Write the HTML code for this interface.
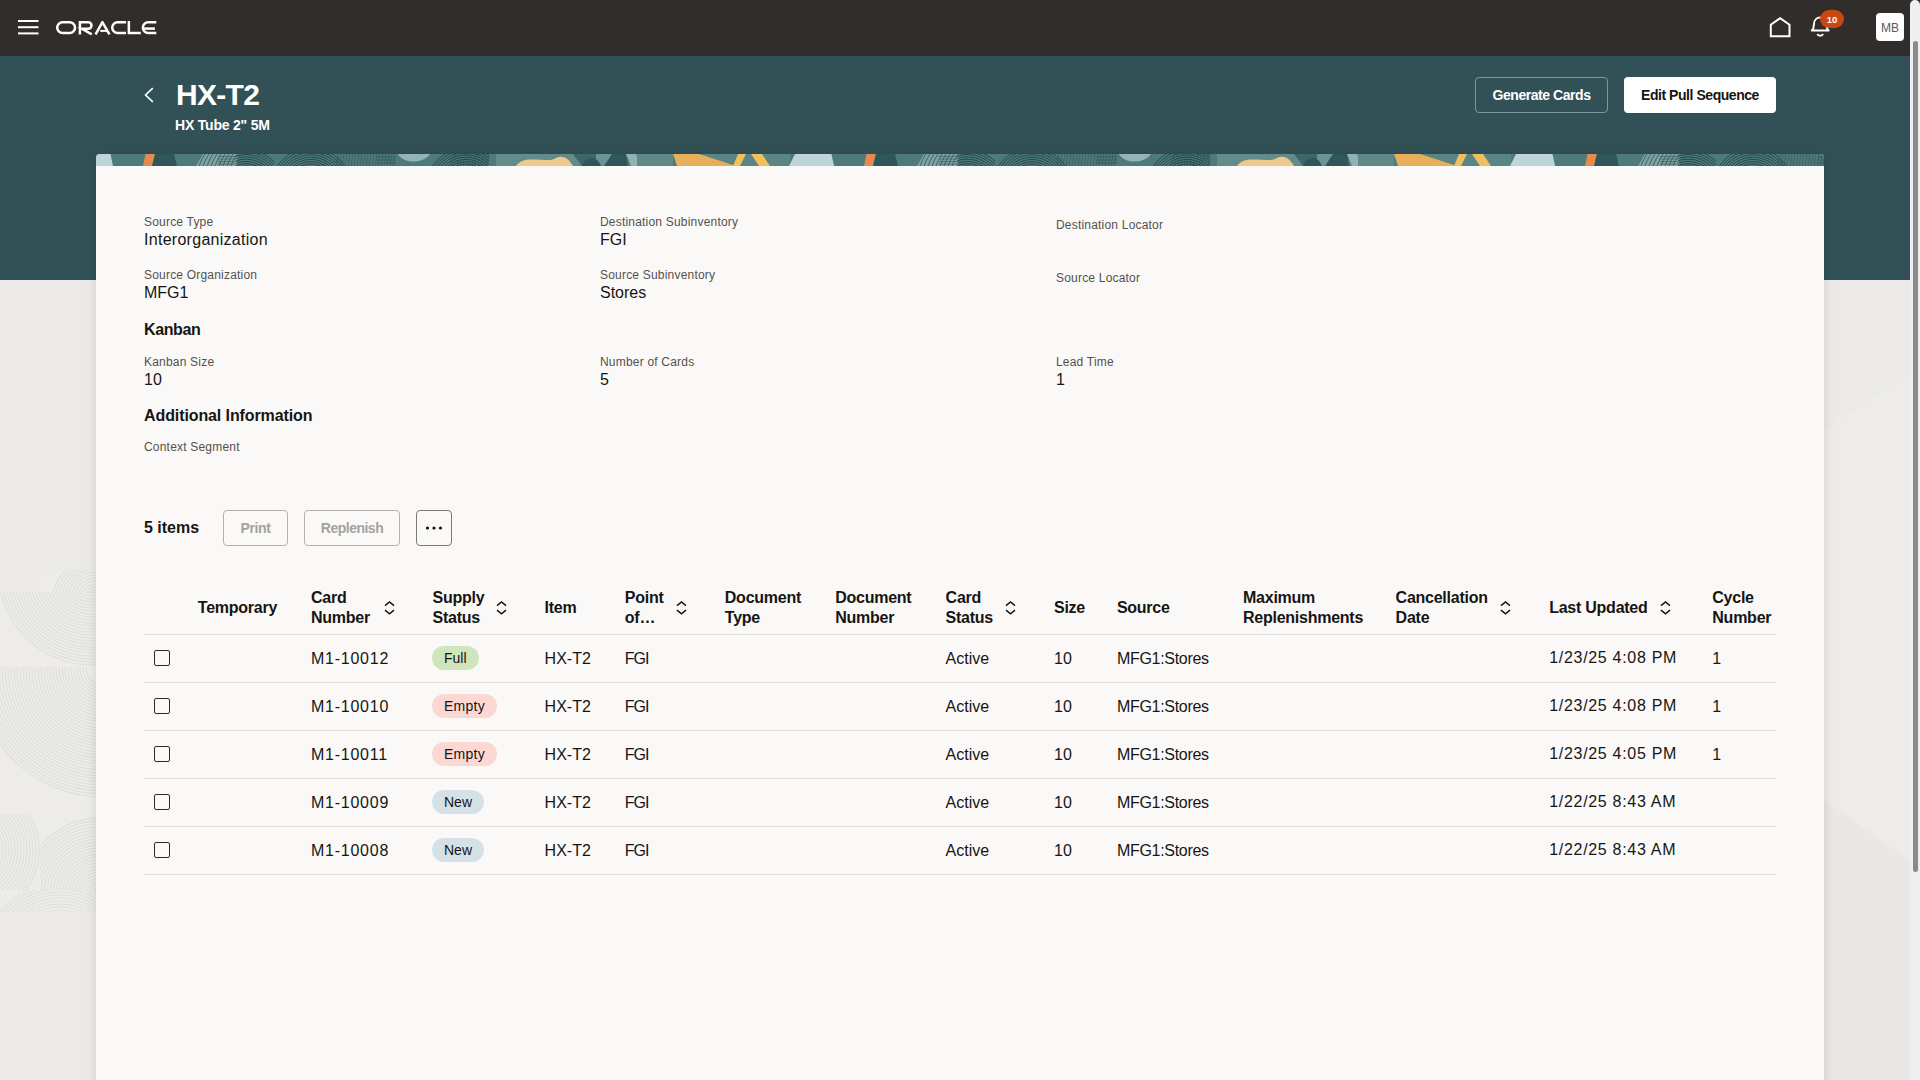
<!DOCTYPE html>
<html><head><meta charset="utf-8">
<style>
*{box-sizing:border-box;margin:0;padding:0}
html,body{width:1920px;height:1080px;overflow:hidden}
body{font-family:"Liberation Sans",sans-serif;background:#ebeae8;color:#161513;position:relative}
.abs{position:absolute}
.t{position:absolute;white-space:nowrap;line-height:1}
#hdr{left:0;top:0;width:1920px;height:56px;background:#312d2a}
#band{left:0;top:56px;width:1910px;height:224px;background:#325157}
#sb{left:1910px;top:0;width:10px;height:1080px;background:#efefef;border-radius:5px 5px 0 0}
#thumb{left:1913px;top:41px;width:5px;height:831px;background:#8a8a8a;border-radius:3px}
#card{left:96px;top:154px;width:1728px;height:940px;background:#fbf9f8;border-radius:4px 4px 0 0;box-shadow:0 0 11px rgba(0,0,0,.13);overflow:hidden}
.lbl{font-size:12px;color:#53514e;letter-spacing:0.2px}
.val{font-size:16px;color:#161513}
.h{font-size:16px;font-weight:700;color:#161513}
.btn{position:absolute;border-radius:4px;height:36px}
.th{font-size:16px;font-weight:700;color:#161513;line-height:20px;letter-spacing:-0.25px}
.td{font-size:16px;color:#161513}
.rowline{position:absolute;left:144px;width:1632px;height:1px;background:#e1dfdc}
.cb{position:absolute;left:154px;width:16px;height:16px;border:1.5px solid #2b2927;border-radius:2px}
.badge{position:absolute;left:432px;height:24px;border-radius:12px;font-size:14px;line-height:24px;padding:0 12px;color:#161513}
.sort{position:absolute;width:10px;height:13px}
</style></head>
<body>
<div id="hdr" class="abs"></div>
<div id="band" class="abs"></div>
<svg class="abs" style="left:0;top:0" width="96" height="1080" viewBox="0 0 96 1080"><defs><clipPath id="lt0"><rect x="40" y="570" width="56" height="22"/></clipPath><clipPath id="lt1"><rect x="0" y="592" width="96" height="75"/></clipPath><clipPath id="lt2"><rect x="0" y="667" width="96" height="148"/></clipPath><clipPath id="lt3"><rect x="40" y="815" width="56" height="75"/></clipPath><clipPath id="lt4"><rect x="0" y="815" width="40" height="75"/></clipPath><clipPath id="lt5"><rect x="0" y="890" width="96" height="22"/></clipPath></defs><g fill="none" stroke="#e0dfdd" stroke-width="1.2"><g clip-path="url(#lt0)"><rect x="40" y="570" width="56" height="22" fill="#edecea" stroke="none"/><circle cx="96" cy="600" r="10"/><circle cx="96" cy="600" r="13"/><circle cx="96" cy="600" r="16"/><circle cx="96" cy="600" r="19"/><circle cx="96" cy="600" r="22"/><circle cx="96" cy="600" r="25"/><circle cx="96" cy="600" r="28"/><circle cx="96" cy="600" r="31"/><circle cx="96" cy="600" r="34"/><circle cx="96" cy="600" r="37"/><circle cx="96" cy="600" r="40"/><circle cx="96" cy="600" r="43"/></g><g clip-path="url(#lt1)"><rect x="0" y="592" width="96" height="75" fill="#edecea" stroke="none"/><circle cx="92" cy="572" r="18"/><circle cx="92" cy="572" r="21"/><circle cx="92" cy="572" r="24"/><circle cx="92" cy="572" r="27"/><circle cx="92" cy="572" r="30"/><circle cx="92" cy="572" r="33"/><circle cx="92" cy="572" r="36"/><circle cx="92" cy="572" r="39"/><circle cx="92" cy="572" r="42"/><circle cx="92" cy="572" r="45"/><circle cx="92" cy="572" r="48"/><circle cx="92" cy="572" r="51"/><circle cx="92" cy="572" r="54"/><circle cx="92" cy="572" r="57"/><circle cx="92" cy="572" r="60"/><circle cx="92" cy="572" r="63"/><circle cx="92" cy="572" r="66"/><circle cx="92" cy="572" r="69"/><circle cx="92" cy="572" r="72"/><circle cx="92" cy="572" r="75"/><circle cx="92" cy="572" r="78"/><circle cx="92" cy="572" r="81"/><circle cx="92" cy="572" r="84"/><circle cx="92" cy="572" r="87"/><circle cx="92" cy="572" r="90"/><circle cx="92" cy="572" r="93"/></g><g clip-path="url(#lt2)"><rect x="0" y="667" width="96" height="148" fill="#edecea" stroke="none"/><circle cx="104" cy="668" r="18"/><circle cx="104" cy="668" r="21"/><circle cx="104" cy="668" r="24"/><circle cx="104" cy="668" r="27"/><circle cx="104" cy="668" r="30"/><circle cx="104" cy="668" r="33"/><circle cx="104" cy="668" r="36"/><circle cx="104" cy="668" r="39"/><circle cx="104" cy="668" r="42"/><circle cx="104" cy="668" r="45"/><circle cx="104" cy="668" r="48"/><circle cx="104" cy="668" r="51"/><circle cx="104" cy="668" r="54"/><circle cx="104" cy="668" r="57"/><circle cx="104" cy="668" r="60"/><circle cx="104" cy="668" r="63"/><circle cx="104" cy="668" r="66"/><circle cx="104" cy="668" r="69"/><circle cx="104" cy="668" r="72"/><circle cx="104" cy="668" r="75"/><circle cx="104" cy="668" r="78"/><circle cx="104" cy="668" r="81"/><circle cx="104" cy="668" r="84"/><circle cx="104" cy="668" r="87"/><circle cx="104" cy="668" r="90"/><circle cx="104" cy="668" r="93"/><circle cx="104" cy="668" r="96"/><circle cx="104" cy="668" r="99"/><circle cx="104" cy="668" r="102"/><circle cx="104" cy="668" r="105"/><circle cx="104" cy="668" r="108"/><circle cx="104" cy="668" r="111"/><circle cx="104" cy="668" r="114"/><circle cx="104" cy="668" r="117"/><circle cx="104" cy="668" r="120"/><circle cx="104" cy="668" r="123"/><circle cx="104" cy="668" r="126"/><circle cx="104" cy="668" r="129"/></g><g clip-path="url(#lt3)"><rect x="40" y="815" width="56" height="75" fill="#edecea" stroke="none"/><circle cx="100" cy="895" r="8"/><circle cx="100" cy="895" r="11"/><circle cx="100" cy="895" r="14"/><circle cx="100" cy="895" r="17"/><circle cx="100" cy="895" r="20"/><circle cx="100" cy="895" r="23"/><circle cx="100" cy="895" r="26"/><circle cx="100" cy="895" r="29"/><circle cx="100" cy="895" r="32"/><circle cx="100" cy="895" r="35"/><circle cx="100" cy="895" r="38"/><circle cx="100" cy="895" r="41"/><circle cx="100" cy="895" r="44"/><circle cx="100" cy="895" r="47"/><circle cx="100" cy="895" r="50"/><circle cx="100" cy="895" r="53"/><circle cx="100" cy="895" r="56"/><circle cx="100" cy="895" r="59"/><circle cx="100" cy="895" r="62"/><circle cx="100" cy="895" r="65"/><circle cx="100" cy="895" r="68"/><circle cx="100" cy="895" r="71"/><circle cx="100" cy="895" r="74"/><circle cx="100" cy="895" r="77"/></g><g clip-path="url(#lt4)"><rect x="0" y="815" width="40" height="75" fill="#edecea" stroke="none"/><circle cx="-30" cy="850" r="18"/><circle cx="-30" cy="850" r="21"/><circle cx="-30" cy="850" r="24"/><circle cx="-30" cy="850" r="27"/><circle cx="-30" cy="850" r="30"/><circle cx="-30" cy="850" r="33"/><circle cx="-30" cy="850" r="36"/><circle cx="-30" cy="850" r="39"/><circle cx="-30" cy="850" r="42"/><circle cx="-30" cy="850" r="45"/><circle cx="-30" cy="850" r="48"/><circle cx="-30" cy="850" r="51"/><circle cx="-30" cy="850" r="54"/><circle cx="-30" cy="850" r="57"/><circle cx="-30" cy="850" r="60"/><circle cx="-30" cy="850" r="63"/><circle cx="-30" cy="850" r="66"/><circle cx="-30" cy="850" r="69"/></g><g clip-path="url(#lt5)"><rect x="0" y="890" width="96" height="22" fill="#edecea" stroke="none"/><circle cx="60" cy="960" r="50"/><circle cx="60" cy="960" r="53"/><circle cx="60" cy="960" r="56"/><circle cx="60" cy="960" r="59"/><circle cx="60" cy="960" r="62"/><circle cx="60" cy="960" r="65"/><circle cx="60" cy="960" r="68"/><circle cx="60" cy="960" r="71"/><circle cx="60" cy="960" r="74"/><circle cx="60" cy="960" r="77"/></g></g></svg><svg class="abs" style="left:1824px;top:280px" width="86" height="800" viewBox="0 0 86 800"><polygon points="0,150 86,95 86,800 0,800" fill="#ffffff" opacity="0.12"/><polygon points="0,520 86,580 86,800 0,800" fill="#000000" opacity="0.015"/></svg>
<div id="sb" class="abs"></div>
<div id="thumb" class="abs"></div>

<!-- header contents -->
<svg class="abs" style="left:18px;top:20px" width="21" height="15" viewBox="0 0 21 15"><rect x="0" y="0" width="20.5" height="2" fill="#fff"/><rect x="0" y="6.2" width="20.5" height="2" fill="#fff"/><rect x="0" y="12.4" width="20.5" height="2" fill="#fff"/></svg>

<svg class="abs" style="left:56px;top:21px" width="102" height="14" viewBox="0 0 102 14">
<g fill="none" stroke="#fff" stroke-width="2.5">
<path d="M6.6 1.25 H13.7 A5.375 5.375 0 0 1 13.7 12 H6.6 A5.375 5.375 0 0 1 6.6 1.25 Z"/>
<path d="M23.9 13.4 V1.25 H32.2 A3.3 3.3 0 0 1 32.2 7.85 H26 L35.8 13.4"/>
<path d="M39.6 13.4 L46.4 1.2 L53.4 13.4"/>
<path d="M44.2 9.9 H51.4" stroke-width="2"/>
<path d="M70 1.25 H61.6 A5.375 5.375 0 0 0 61.6 12 H70"/>
<path d="M72.85 0 V12 H84.8"/>
<path d="M100.3 1.25 H92.2 A5.375 5.375 0 0 0 92.2 12 H100.3"/>
<path d="M87.6 7.6 H98.9"/>
</g></svg>

<svg class="abs" style="left:1769px;top:16px" width="23" height="22" viewBox="0 0 23 22"><path d="M1.8 20.25 V8.75 L11.15 2.2 L20.5 8.75 V20.25 Z" fill="none" stroke="#fff" stroke-width="2" stroke-linejoin="miter"/></svg>

<svg class="abs" style="left:1809px;top:15px" width="23" height="24" viewBox="0 0 23 24"><path d="M2.8 15.6 C4.6 14 4.9 12 4.9 9.5 C4.9 5.2 7.7 2.6 11.2 2.6 C14.7 2.6 17.5 5.2 17.5 9.5 C17.5 12 17.8 14 19.6 15.6 Z" fill="none" stroke="#fff" stroke-width="2" stroke-linejoin="round"/><path d="M8.4 19 A2.9 2.3 0 0 0 14 19" fill="none" stroke="#fff" stroke-width="2"/></svg>
<div class="abs" style="left:1820px;top:10px;width:24px;height:18px;border-radius:9px;background:#c94811"></div>
<div class="t" style="left:1820px;top:14.8px;width:24px;text-align:center;font-size:9.5px;color:#fff;font-weight:700">10</div>

<div class="abs" style="left:1876px;top:13px;width:28px;height:28px;border-radius:4px;background:#fff"></div>
<div class="t" style="left:1876px;top:21.6px;width:28px;text-align:center;font-size:12px;color:#535b63">MB</div>

<!-- page header -->
<svg class="abs" style="left:143px;top:87px" width="12" height="16" viewBox="0 0 12 16"><path d="M9.8 1.2 L2.5 8 L9.8 14.8" fill="none" stroke="#fff" stroke-width="1.6"/></svg>
<div class="t" style="left:176px;top:80px;font-size:30px;font-weight:700;color:#fff;letter-spacing:-0.7px">HX-T2</div>
<div class="t" style="left:175px;top:118px;font-size:14px;font-weight:700;color:#fff;letter-spacing:-0.2px">HX Tube 2" 5M</div>

<div class="btn" style="left:1475px;top:77px;width:133px;border:1px solid #7d979b"></div>
<div class="t" style="left:1475px;top:88px;width:133px;text-align:center;font-size:14px;font-weight:700;color:#fff;letter-spacing:-0.45px">Generate Cards</div>
<div class="btn" style="left:1624px;top:77px;width:152px;background:#fff"></div>
<div class="t" style="left:1624px;top:88px;width:152px;text-align:center;font-size:14px;font-weight:700;color:#161513;letter-spacing:-0.45px">Edit Pull Sequence</div>

<!-- card -->
<div id="card" class="abs">
<svg id="banner" class="abs" style="left:0;top:0" width="1728" height="12" viewBox="0 0 1728 12"><defs><clipPath id="cg0"><rect x="140" y="0" width="38" height="12"/></clipPath><clipPath id="cg1"><rect x="170" y="0" width="130" height="12"/></clipPath><clipPath id="cg2"><rect x="322" y="0" width="71" height="12"/></clipPath><g id="bp"><polygon points="-22,0 14.5,0 17,12 -28,12" fill="#bdd5d8"/><polygon points="49.5,0 59,0 56,12 47,12" fill="#e8894d"/><polygon points="59,0 78,0 81,12 56,12" fill="#2f5659"/><polygon points="107,0 142,0 142,12 100,12" fill="#7da3a2"/><path d="M109,0 Q105,6 103,12" stroke="#2f5659" stroke-width="0.8" fill="none"/><path d="M113,0 Q109,6 107,12" stroke="#2f5659" stroke-width="0.8" fill="none"/><path d="M117,0 Q113,6 111,12" stroke="#2f5659" stroke-width="0.8" fill="none"/><path d="M121,0 Q117,6 115,12" stroke="#2f5659" stroke-width="0.8" fill="none"/><path d="M125,0 Q121,6 119,12" stroke="#2f5659" stroke-width="0.8" fill="none"/><path d="M129,0 Q125,6 123,12" stroke="#2f5659" stroke-width="0.8" fill="none"/><path d="M133,0 Q129,6 127,12" stroke="#2f5659" stroke-width="0.8" fill="none"/><path d="M137,0 Q133,6 131,12" stroke="#2f5659" stroke-width="0.8" fill="none"/><path d="M141,0 Q137,6 135,12" stroke="#2f5659" stroke-width="0.8" fill="none"/><line x1="122" y1="2.5" x2="142" y2="2.5" stroke="#2f5659" stroke-width="0.6"/><line x1="122" y1="5" x2="142" y2="5" stroke="#2f5659" stroke-width="0.6"/><line x1="122" y1="7.5" x2="142" y2="7.5" stroke="#2f5659" stroke-width="0.6"/><line x1="122" y1="10" x2="142" y2="10" stroke="#2f5659" stroke-width="0.6"/><g clip-path="url(#cg0)"><circle cx="150" cy="36" r="24.0" stroke="#1f4043" stroke-width="0.9" fill="none" opacity="0.95"/><circle cx="150" cy="36" r="26.3" stroke="#1f4043" stroke-width="0.9" fill="none" opacity="0.95"/><circle cx="150" cy="36" r="28.6" stroke="#1f4043" stroke-width="0.9" fill="none" opacity="0.95"/><circle cx="150" cy="36" r="30.9" stroke="#1f4043" stroke-width="0.9" fill="none" opacity="0.95"/><circle cx="150" cy="36" r="33.2" stroke="#1f4043" stroke-width="0.9" fill="none" opacity="0.95"/><circle cx="150" cy="36" r="35.5" stroke="#1f4043" stroke-width="0.9" fill="none" opacity="0.95"/><circle cx="150" cy="36" r="37.8" stroke="#1f4043" stroke-width="0.9" fill="none" opacity="0.95"/><circle cx="150" cy="36" r="40.1" stroke="#1f4043" stroke-width="0.9" fill="none" opacity="0.95"/></g><g clip-path="url(#cg1)"><circle cx="215" cy="34" r="24.0" stroke="#1f4043" stroke-width="0.9" fill="none" opacity="0.95"/><circle cx="215" cy="34" r="26.3" stroke="#1f4043" stroke-width="0.9" fill="none" opacity="0.95"/><circle cx="215" cy="34" r="28.6" stroke="#1f4043" stroke-width="0.9" fill="none" opacity="0.95"/><circle cx="215" cy="34" r="30.9" stroke="#1f4043" stroke-width="0.9" fill="none" opacity="0.95"/><circle cx="215" cy="34" r="33.2" stroke="#1f4043" stroke-width="0.9" fill="none" opacity="0.95"/><circle cx="215" cy="34" r="35.5" stroke="#1f4043" stroke-width="0.9" fill="none" opacity="0.95"/><circle cx="215" cy="34" r="37.8" stroke="#1f4043" stroke-width="0.9" fill="none" opacity="0.95"/><circle cx="215" cy="34" r="40.1" stroke="#1f4043" stroke-width="0.9" fill="none" opacity="0.95"/></g><g clip-path="url(#cg2)"><circle cx="370" cy="34" r="24.0" stroke="#1f4043" stroke-width="0.9" fill="none" opacity="0.95"/><circle cx="370" cy="34" r="26.3" stroke="#1f4043" stroke-width="0.9" fill="none" opacity="0.95"/><circle cx="370" cy="34" r="28.6" stroke="#1f4043" stroke-width="0.9" fill="none" opacity="0.95"/><circle cx="370" cy="34" r="30.9" stroke="#1f4043" stroke-width="0.9" fill="none" opacity="0.95"/><circle cx="370" cy="34" r="33.2" stroke="#1f4043" stroke-width="0.9" fill="none" opacity="0.95"/><circle cx="370" cy="34" r="35.5" stroke="#1f4043" stroke-width="0.9" fill="none" opacity="0.95"/><circle cx="370" cy="34" r="37.8" stroke="#1f4043" stroke-width="0.9" fill="none" opacity="0.95"/><circle cx="370" cy="34" r="40.1" stroke="#1f4043" stroke-width="0.9" fill="none" opacity="0.95"/></g><line x1="242" y1="0" x2="240" y2="12" stroke="#24474a" stroke-width="0.6" opacity="0.7"/><line x1="245" y1="0" x2="243" y2="12" stroke="#24474a" stroke-width="0.6" opacity="0.7"/><line x1="248" y1="0" x2="246" y2="12" stroke="#24474a" stroke-width="0.6" opacity="0.7"/><line x1="251" y1="0" x2="249" y2="12" stroke="#24474a" stroke-width="0.6" opacity="0.7"/><line x1="254" y1="0" x2="252" y2="12" stroke="#24474a" stroke-width="0.6" opacity="0.7"/><line x1="257" y1="0" x2="255" y2="12" stroke="#24474a" stroke-width="0.6" opacity="0.7"/><line x1="260" y1="0" x2="258" y2="12" stroke="#24474a" stroke-width="0.6" opacity="0.7"/><line x1="263" y1="0" x2="261" y2="12" stroke="#24474a" stroke-width="0.6" opacity="0.7"/><line x1="266" y1="0" x2="264" y2="12" stroke="#24474a" stroke-width="0.6" opacity="0.7"/><line x1="269" y1="0" x2="267" y2="12" stroke="#24474a" stroke-width="0.6" opacity="0.7"/><line x1="272" y1="0" x2="270" y2="12" stroke="#24474a" stroke-width="0.6" opacity="0.7"/><line x1="275" y1="0" x2="273" y2="12" stroke="#24474a" stroke-width="0.6" opacity="0.7"/><line x1="278" y1="0" x2="276" y2="12" stroke="#24474a" stroke-width="0.6" opacity="0.7"/><line x1="281" y1="0" x2="279" y2="12" stroke="#24474a" stroke-width="0.6" opacity="0.7"/><line x1="284" y1="0" x2="282" y2="12" stroke="#24474a" stroke-width="0.6" opacity="0.7"/><line x1="287" y1="0" x2="285" y2="12" stroke="#24474a" stroke-width="0.6" opacity="0.7"/><line x1="290" y1="0" x2="288" y2="12" stroke="#24474a" stroke-width="0.6" opacity="0.7"/><line x1="293" y1="0" x2="291" y2="12" stroke="#24474a" stroke-width="0.6" opacity="0.7"/><line x1="296" y1="0" x2="294" y2="12" stroke="#24474a" stroke-width="0.6" opacity="0.7"/><line x1="299" y1="0" x2="297" y2="12" stroke="#24474a" stroke-width="0.6" opacity="0.7"/><line x1="357" y1="0" x2="355" y2="12" stroke="#24474a" stroke-width="0.6" opacity="0.7"/><line x1="360" y1="0" x2="358" y2="12" stroke="#24474a" stroke-width="0.6" opacity="0.7"/><line x1="363" y1="0" x2="361" y2="12" stroke="#24474a" stroke-width="0.6" opacity="0.7"/><line x1="366" y1="0" x2="364" y2="12" stroke="#24474a" stroke-width="0.6" opacity="0.7"/><line x1="369" y1="0" x2="367" y2="12" stroke="#24474a" stroke-width="0.6" opacity="0.7"/><line x1="372" y1="0" x2="370" y2="12" stroke="#24474a" stroke-width="0.6" opacity="0.7"/><line x1="375" y1="0" x2="373" y2="12" stroke="#24474a" stroke-width="0.6" opacity="0.7"/><line x1="378" y1="0" x2="376" y2="12" stroke="#24474a" stroke-width="0.6" opacity="0.7"/><line x1="381" y1="0" x2="379" y2="12" stroke="#24474a" stroke-width="0.6" opacity="0.7"/><line x1="384" y1="0" x2="382" y2="12" stroke="#24474a" stroke-width="0.6" opacity="0.7"/><line x1="387" y1="0" x2="385" y2="12" stroke="#24474a" stroke-width="0.6" opacity="0.7"/><line x1="390" y1="0" x2="388" y2="12" stroke="#24474a" stroke-width="0.6" opacity="0.7"/><line x1="393" y1="0" x2="391" y2="12" stroke="#24474a" stroke-width="0.6" opacity="0.7"/><line x1="280" y1="3" x2="300" y2="3" stroke="#24474a" stroke-width="0.6" opacity="0.7"/><line x1="280" y1="6" x2="300" y2="6" stroke="#24474a" stroke-width="0.6" opacity="0.7"/><line x1="280" y1="9" x2="300" y2="9" stroke="#24474a" stroke-width="0.6" opacity="0.7"/><path d="M302,0 L334,0 C330,6 322,8 316,7.5 C309,7 304,4 302,0 Z" fill="#93b4b4"/><rect x="400" y="0" width="86" height="12" fill="#628c8a"/><path d="M420,12 C424,6 430,5 440,5.5 C450,6 455,7 460,4 C466,1 472,3 477,12 Z" fill="#eec98c"/><polygon points="477,0 500,0 505,12 486,12" fill="#3d6668"/><polygon points="500,0 516,0 512,12 500,12" fill="#6a9493"/><path d="M486,12 C488,6 492,4 496,4 C500,4 503,7 505,12 Z" fill="#2f5659"/><polygon points="516,0 530,0 532,12 508,12" fill="#2f5659"/><polygon points="530,0 540,0 545,12 535,12" fill="#8fb3b3"/><rect x="541" y="0" width="36" height="12" fill="#5f8987"/><rect x="600" y="0" width="94" height="12" fill="#5a8583"/><polygon points="577,0 603,0 640,12 581,12" fill="#e8af5b"/><polygon points="642,0 650,0 644,12 637,12" fill="#f0c05e"/><polygon points="655,0 666,0 674,12 663,12" fill="#f0c05e"/><polygon points="700,0 734,0 738,12 694,12" fill="#bdd5d8"/></g></defs><rect x="0" y="0" width="1728" height="12" fill="#4d7b79"/><use href="#bp" x="0"/><use href="#bp" x="721"/><use href="#bp" x="1442"/></svg>
</div>


<!-- fields -->
<div class="t lbl" style="left:144px;top:216px">Source Type</div>
<div class="t val" style="left:144px;top:232px;letter-spacing:0.28px">Interorganization</div>
<div class="t lbl" style="left:600px;top:216px">Destination Subinventory</div>
<div class="t val" style="left:600px;top:232px">FGI</div>
<div class="t lbl" style="left:1056px;top:219px">Destination Locator</div>
<div class="t lbl" style="left:144px;top:269px">Source Organization</div>
<div class="t val" style="left:144px;top:285px">MFG1</div>
<div class="t lbl" style="left:600px;top:269px">Source Subinventory</div>
<div class="t val" style="left:600px;top:285px">Stores</div>
<div class="t lbl" style="left:1056px;top:272px">Source Locator</div>
<div class="t h" style="left:144px;top:322px;letter-spacing:-0.4px">Kanban</div>
<div class="t lbl" style="left:144px;top:356px">Kanban Size</div>
<div class="t val" style="left:144px;top:372px">10</div>
<div class="t lbl" style="left:600px;top:356px">Number of Cards</div>
<div class="t val" style="left:600px;top:372px">5</div>
<div class="t lbl" style="left:1056px;top:356px">Lead Time</div>
<div class="t val" style="left:1056px;top:372px">1</div>
<div class="t h" style="left:144px;top:408px;letter-spacing:-0.1px">Additional Information</div>
<div class="t lbl" style="left:144px;top:441px">Context Segment</div>

<!-- toolbar -->
<div class="t h" style="left:144px;top:520px">5 items</div>
<div class="btn" style="left:223px;top:510px;width:65px;border:1px solid #b3b1ae"></div>
<div class="t" style="left:223px;top:521px;width:65px;text-align:center;font-size:14px;font-weight:700;letter-spacing:-0.4px;color:#a4a29f">Print</div>
<div class="btn" style="left:304px;top:510px;width:96px;border:1px solid #b3b1ae"></div>
<div class="t" style="left:304px;top:521px;width:96px;text-align:center;font-size:14px;font-weight:700;letter-spacing:-0.5px;color:#a4a29f">Replenish</div>
<div class="btn" style="left:416px;top:510px;width:36px;border:1px solid #7c7a77"></div>
<svg class="abs" style="left:416px;top:510px" width="36" height="36"><circle cx="11.5" cy="18" r="1.6" fill="#161513"/><circle cx="18" cy="18" r="1.6" fill="#161513"/><circle cx="24.5" cy="18" r="1.6" fill="#161513"/></svg>
<div class="abs th" style="left:311px;top:587.5px;white-space:nowrap">Card<br>Number</div>
<div class="abs th" style="left:432.5px;top:587.5px;white-space:nowrap">Supply<br>Status</div>
<div class="abs th" style="left:624.8px;top:587.5px;white-space:nowrap">Point<br>of…</div>
<div class="abs th" style="left:724.8px;top:587.5px;white-space:nowrap">Document<br>Type</div>
<div class="abs th" style="left:835.2px;top:587.5px;white-space:nowrap">Document<br>Number</div>
<div class="abs th" style="left:945.6px;top:587.5px;white-space:nowrap">Card<br>Status</div>
<div class="abs th" style="left:1243px;top:587.5px;white-space:nowrap">Maximum<br>Replenishments</div>
<div class="abs th" style="left:1395.6px;top:587.5px;white-space:nowrap">Cancellation<br>Date</div>
<div class="abs th" style="left:1712.3px;top:587.5px;white-space:nowrap">Cycle<br>Number</div>
<div class="abs th" style="left:197.8px;top:597.5px;white-space:nowrap">Temporary</div>
<div class="abs th" style="left:544.6px;top:597.5px;white-space:nowrap">Item</div>
<div class="abs th" style="left:1054px;top:597.5px;white-space:nowrap">Size</div>
<div class="abs th" style="left:1116.9px;top:597.5px;white-space:nowrap">Source</div>
<div class="abs th" style="left:1549.2px;top:597.5px;white-space:nowrap">Last Updated</div>
<svg class="abs" style="left:383.9px;top:600px" width="11" height="16" viewBox="0 0 11 16"><path d="M1 5.6 L5.5 2 L10 5.6 M1 10.2 L5.5 13.8 L10 10.2" fill="none" stroke="#161513" stroke-width="1.5"/></svg>
<svg class="abs" style="left:495.9px;top:600px" width="11" height="16" viewBox="0 0 11 16"><path d="M1 5.6 L5.5 2 L10 5.6 M1 10.2 L5.5 13.8 L10 10.2" fill="none" stroke="#161513" stroke-width="1.5"/></svg>
<svg class="abs" style="left:676.1px;top:600px" width="11" height="16" viewBox="0 0 11 16"><path d="M1 5.6 L5.5 2 L10 5.6 M1 10.2 L5.5 13.8 L10 10.2" fill="none" stroke="#161513" stroke-width="1.5"/></svg>
<svg class="abs" style="left:1004.9px;top:600px" width="11" height="16" viewBox="0 0 11 16"><path d="M1 5.6 L5.5 2 L10 5.6 M1 10.2 L5.5 13.8 L10 10.2" fill="none" stroke="#161513" stroke-width="1.5"/></svg>
<svg class="abs" style="left:1500.1px;top:600px" width="11" height="16" viewBox="0 0 11 16"><path d="M1 5.6 L5.5 2 L10 5.6 M1 10.2 L5.5 13.8 L10 10.2" fill="none" stroke="#161513" stroke-width="1.5"/></svg>
<svg class="abs" style="left:1659.9px;top:600px" width="11" height="16" viewBox="0 0 11 16"><path d="M1 5.6 L5.5 2 L10 5.6 M1 10.2 L5.5 13.8 L10 10.2" fill="none" stroke="#161513" stroke-width="1.5"/></svg>
<div class="rowline" style="top:634px"></div>
<div class="cb" style="top:650px"></div>
<div class="t td" style="left:311px;top:651px;letter-spacing:0.75px">M1-10012</div>
<div class="badge" style="top:646px;background:#cfe5bb">Full</div>
<div class="t td" style="left:544.6px;top:651px">HX-T2</div>
<div class="t td" style="left:624.8px;top:651px;letter-spacing:-1px">FGI</div>
<div class="t td" style="left:945.6px;top:651px">Active</div>
<div class="t td" style="left:1054px;top:651px">10</div>
<div class="t td" style="left:1116.9px;top:651px;letter-spacing:-0.3px">MFG1:Stores</div>
<div class="t td" style="left:1549.2px;top:650px;letter-spacing:0.7px">1/23/25 4:08 PM</div>
<div class="t td" style="left:1712.3px;top:651px">1</div>
<div class="rowline" style="top:682px"></div>
<div class="cb" style="top:698px"></div>
<div class="t td" style="left:311px;top:699px;letter-spacing:0.75px">M1-10010</div>
<div class="badge" style="top:694px;background:#fdd7d2;letter-spacing:0.25px">Empty</div>
<div class="t td" style="left:544.6px;top:699px">HX-T2</div>
<div class="t td" style="left:624.8px;top:699px;letter-spacing:-1px">FGI</div>
<div class="t td" style="left:945.6px;top:699px">Active</div>
<div class="t td" style="left:1054px;top:699px">10</div>
<div class="t td" style="left:1116.9px;top:699px;letter-spacing:-0.3px">MFG1:Stores</div>
<div class="t td" style="left:1549.2px;top:698px;letter-spacing:0.7px">1/23/25 4:08 PM</div>
<div class="t td" style="left:1712.3px;top:699px">1</div>
<div class="rowline" style="top:730px"></div>
<div class="cb" style="top:746px"></div>
<div class="t td" style="left:311px;top:747px;letter-spacing:0.75px">M1-10011</div>
<div class="badge" style="top:742px;background:#fdd7d2;letter-spacing:0.25px">Empty</div>
<div class="t td" style="left:544.6px;top:747px">HX-T2</div>
<div class="t td" style="left:624.8px;top:747px;letter-spacing:-1px">FGI</div>
<div class="t td" style="left:945.6px;top:747px">Active</div>
<div class="t td" style="left:1054px;top:747px">10</div>
<div class="t td" style="left:1116.9px;top:747px;letter-spacing:-0.3px">MFG1:Stores</div>
<div class="t td" style="left:1549.2px;top:746px;letter-spacing:0.7px">1/23/25 4:05 PM</div>
<div class="t td" style="left:1712.3px;top:747px">1</div>
<div class="rowline" style="top:778px"></div>
<div class="cb" style="top:794px"></div>
<div class="t td" style="left:311px;top:795px;letter-spacing:0.75px">M1-10009</div>
<div class="badge" style="top:790px;background:#d4e2e8">New</div>
<div class="t td" style="left:544.6px;top:795px">HX-T2</div>
<div class="t td" style="left:624.8px;top:795px;letter-spacing:-1px">FGI</div>
<div class="t td" style="left:945.6px;top:795px">Active</div>
<div class="t td" style="left:1054px;top:795px">10</div>
<div class="t td" style="left:1116.9px;top:795px;letter-spacing:-0.3px">MFG1:Stores</div>
<div class="t td" style="left:1549.2px;top:794px;letter-spacing:0.7px">1/22/25 8:43 AM</div>
<div class="rowline" style="top:826px"></div>
<div class="cb" style="top:842px"></div>
<div class="t td" style="left:311px;top:843px;letter-spacing:0.75px">M1-10008</div>
<div class="badge" style="top:838px;background:#d4e2e8">New</div>
<div class="t td" style="left:544.6px;top:843px">HX-T2</div>
<div class="t td" style="left:624.8px;top:843px;letter-spacing:-1px">FGI</div>
<div class="t td" style="left:945.6px;top:843px">Active</div>
<div class="t td" style="left:1054px;top:843px">10</div>
<div class="t td" style="left:1116.9px;top:843px;letter-spacing:-0.3px">MFG1:Stores</div>
<div class="t td" style="left:1549.2px;top:842px;letter-spacing:0.7px">1/22/25 8:43 AM</div>
<div class="rowline" style="top:874px"></div>
</body></html>
